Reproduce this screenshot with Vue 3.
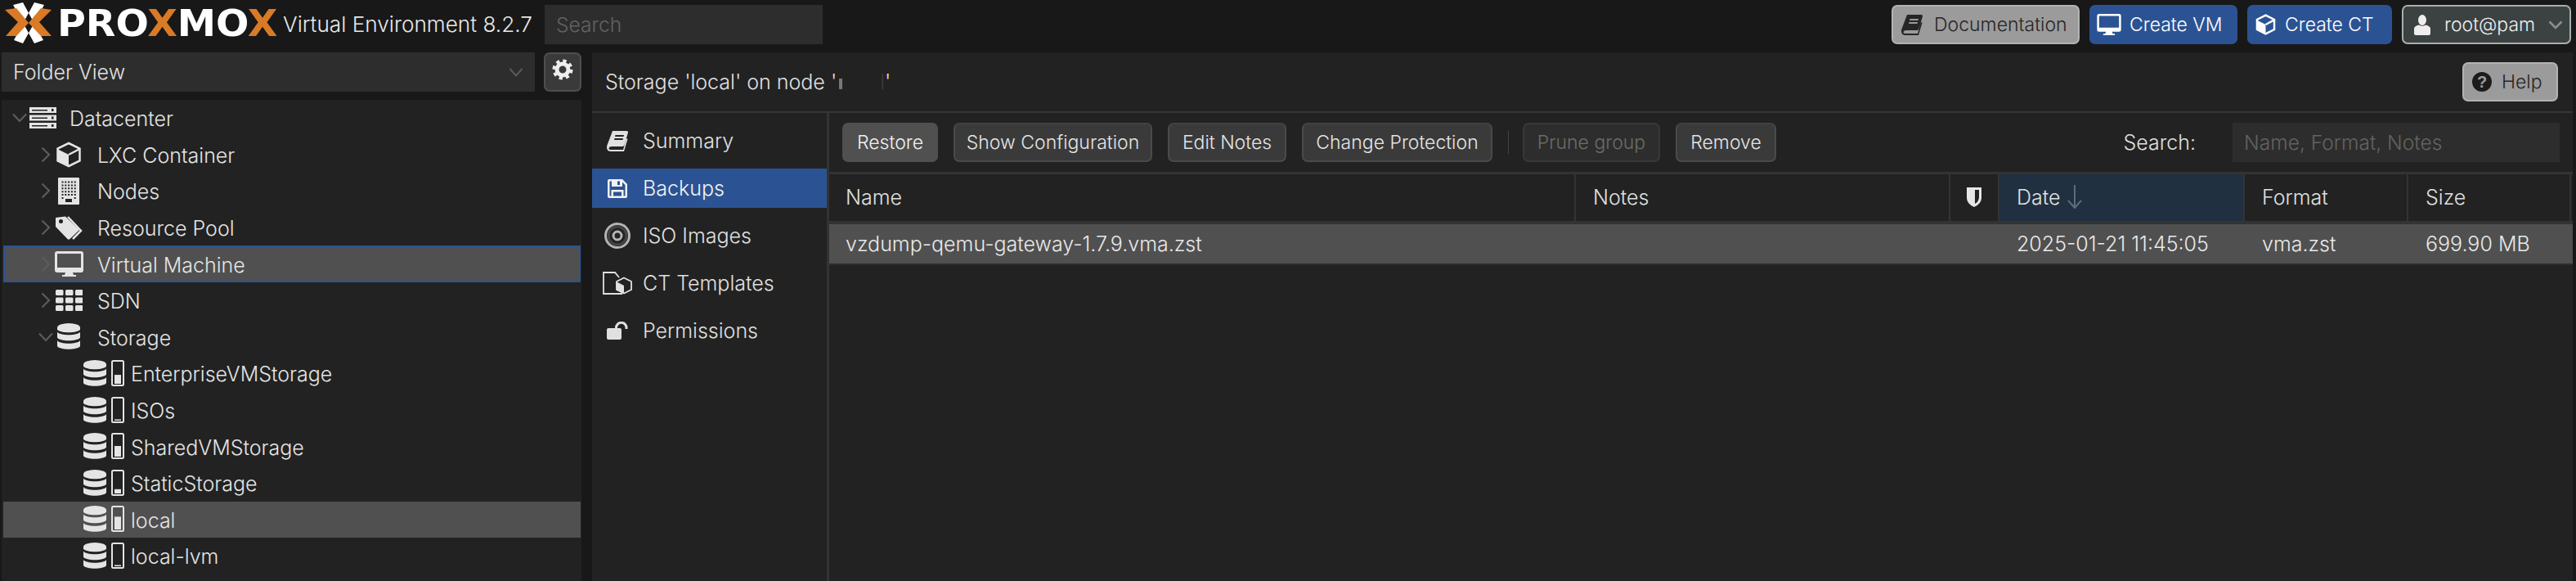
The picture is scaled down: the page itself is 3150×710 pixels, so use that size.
<script setup>
const bandsFor = () => [10.5, 21].map(y => `M0 ${y}C3 ${y + 5} 25 ${y + 5} 28 ${y}V${y + 7}C25 ${y + 12} 3 ${y + 12} 0 ${y + 7}Z`).join('')

const buildingPath = (() => {
  let d = 'M1 0H25Q26 0 26 1V32Q26 33 25 33H1Q0 33 0 32V1Q0 0 1 0Z'
  for (let r = 0; r < 6; r++) {
    for (let c = 0; c < 5; c++) {
      if (r === 5 && c > 0 && c < 4) continue
      const x = 4.5 + c * 3.8
      const y = 4.5 + r * 3.9
      d += `M${x} ${y}h2v2h-2Z`
    }
  }
  d += 'M9 26h8v4h-8Z'
  return d
})()

const sdnCells = []
for (let r = 0; r < 3; r++) for (let c = 0; c < 3; c++) sdnCells.push({ x: c * 12, y: r * 9.5 })

const tree = [
  { label: 'Datacenter', level: 0, arrow: 'down', icon: 'server' },
  { label: 'LXC Container', level: 1, arrow: 'right', icon: 'cube' },
  { label: 'Nodes', level: 1, arrow: 'right', icon: 'building' },
  { label: 'Resource Pool', level: 1, arrow: 'right', icon: 'tags' },
  { label: 'Virtual Machine', level: 1, arrow: 'right', icon: 'monitor', focus: true },
  { label: 'SDN', level: 1, arrow: 'right', icon: 'grid' },
  { label: 'Storage', level: 1, arrow: 'down', icon: 'db' },
  { label: 'EnterpriseVMStorage', level: 2, icon: 'store', pct: 0.42 },
  { label: 'ISOs', level: 2, icon: 'store', pct: 0.03 },
  { label: 'SharedVMStorage', level: 2, icon: 'store', pct: 0.5 },
  { label: 'StaticStorage', level: 2, icon: 'store', pct: 0.2 },
  { label: 'local', level: 2, icon: 'store', pct: 0.6, selected: true },
  { label: 'local-lvm', level: 2, icon: 'store', pct: 0.03 }
]

const tabs = [
  { label: 'Summary', icon: 'book' },
  { label: 'Backups', icon: 'floppy', active: true },
  { label: 'ISO Images', icon: 'cd' },
  { label: 'CT Templates', icon: 'template' },
  { label: 'Permissions', icon: 'unlock' }
]

const tools = [
  { label: 'Restore', cls: 'w-restore hot' },
  { label: 'Show Configuration', cls: 'w-show' },
  { label: 'Edit Notes', cls: 'w-edit' },
  { label: 'Change Protection', cls: 'w-change' },
  { sep: true },
  { label: 'Prune group', cls: 'w-prune off' },
  { label: 'Remove', cls: 'w-remove' }
]

const barFill = pct => Math.max(1.5, 26 * pct)
const bands = bandsFor()
</script>

<template>
  <div class="app">
    <header class="top">
      <div class="logo">
        <svg class="mark" viewBox="6 4 58 52" width="58" height="52">
          <path fill="#fff" d="M16 7L28 4L53 50L42 54ZM54 7L42 4L17 50L28 54Z" />
          <path fill="#d97a27" d="M6 13L20 11L35 29L20 45L7 45L22 28ZM63 13L50 11L35 29L50 45L63 45L48 28Z" />
        </svg>
        <span class="wordmark">PRO<b>X</b>MO<b>X</b></span>
      </div>
      <span class="product">Virtual Environment 8.2.7</span>
      <div class="field top-search">Search</div>
      <div class="top-actions">
        <button class="btn grey w-doc">
          <svg width="26" height="25" viewBox="0 0 26 25"><path fill="currentColor" fill-rule="evenodd" d="M7 0H24Q26.500 0 26 2L21.500 17Q21 19 19 19H6Q2.500 19 2.500 21.500Q2.500 23 5 23H20L24 9L25.500 10L21 25H5Q0 25 0 20Q0 18 1 16ZM10.500 5H21L20.500 7H10ZM9.500 9H20L19.500 11H9Z" /></svg>
          Documentation
        </button>
        <button class="btn blue w-vm">
          <svg width="30" height="26" viewBox="0 0 35 31"><path fill="currentColor" fill-rule="evenodd" d="M3 0H32Q35 0 35 3V23Q35 26 32 26H3Q0 26 0 23V3Q0 0 3 0ZM3 3V20H32V3ZM13 26H22L23 29H26V31H9V29H12Z" /></svg>
          Create VM
        </button>
        <button class="btn blue w-ct">
          <svg width="27" height="26" viewBox="0 0 30 32"><g fill="none" stroke="currentColor" stroke-width="3"><path d="M15 2L28 8.500V23.500L15 30L2 23.500V8.500Z" /><path d="M15 16L28 9" /></g><path fill="currentColor" d="M1 9L15 16V31L1 24Z" /></svg>
          Create CT
        </button>
        <button class="btn user w-user">
          <svg width="22" height="25" viewBox="0 0 22 25"><ellipse cx="11" cy="6.500" rx="5" ry="6.500" fill="currentColor" /><path fill="currentColor" d="M1 17Q1 14 7 12.500Q11 15 15 12.500Q21 14 21 17V23Q21 25 19 25H3Q1 25 1 23Z" /></svg>
          <span class="user-name">root@pam</span>
          <svg class="user-caret" width="18" height="11" viewBox="0 0 18 11"><path d="M1.500 1.500L9 9L16.500 1.500" fill="none" stroke="#8b8f8f" stroke-width="2.500" /></svg>
        </button>
      </div>
    </header>

    <div class="body">
      <aside class="left">
        <div class="left-tools">
          <div class="combo">
            <span>Folder View</span>
            <svg width="18" height="11" viewBox="0 0 18 11"><path d="M1.500 1L9 9.500L16.500 1" fill="none" stroke="#5a5a5a" stroke-width="2" /></svg>
          </div>
          <button class="gear">
            <svg width="26" height="26" viewBox="0 0 26 26"><circle cx="13" cy="13" r="7" fill="none" stroke="#eee" stroke-width="5" /><circle cx="13" cy="13" r="10.500" fill="none" stroke="#eee" stroke-width="4" stroke-dasharray="4.200 4.050" /></svg>
          </button>
        </div>
        <div class="tree">
          <div v-for="row in tree" :key="row.label" class="row" :class="[`lv${row.level}`, { focus: row.focus, sel: row.selected }]">
            <span class="arrow">
              <svg v-if="row.arrow === 'right'" width="12" height="20" viewBox="0 0 12 20"><path d="M1.500 1.500L10 10L1.500 18.500" fill="none" stroke="#5c5c5c" stroke-width="2.200" /></svg>
              <svg v-else-if="row.arrow === 'down'" width="18" height="12" viewBox="0 0 18 12"><path d="M1 1.500L9 10L17 1.500" fill="none" stroke="#5c5c5c" stroke-width="2.200" /></svg>
            </span>
            <span class="ico">
              <svg v-if="row.icon === 'server'" width="33" height="26" viewBox="0 0 33 26"><path fill="currentColor" fill-rule="evenodd" d="M0 0H33V7H0ZM3 3V4.500H22V3ZM27 2V5H29.500V2ZM0 9.500H33V16.500H0ZM3 12.500V14H22V12.500ZM27 11.500V14.500H29.500V11.500ZM0 19H33V26H0ZM3 22V23.500H22V22ZM27 21V24H29.500V21Z" /></svg>
              <svg v-else-if="row.icon === 'cube'" width="30" height="32" viewBox="0 0 30 32"><g fill="none" stroke="currentColor" stroke-width="2.500"><path d="M15 2L28.500 8.500V23.500L15 30L1.500 23.500V8.500Z" /><path d="M15 16L28.500 9" /></g><path fill="currentColor" d="M1 9L15 16V31L1 24Z" /></svg>
              <svg v-else-if="row.icon === 'building'" width="26" height="33" viewBox="0 0 26 33"><path fill="currentColor" fill-rule="evenodd" :d="buildingPath" /></svg>
              <svg v-else-if="row.icon === 'tags'" width="34" height="30" viewBox="0 0 34 30"><path fill="currentColor" fill-rule="evenodd" d="M1 3L13 1.500L29 17Q30 18 29 19L18.500 29Q17 30.500 15.500 29L1 14ZM5 7.500A2.500 2.500 0 1 0 10 7.500A2.500 2.500 0 1 0 5 7.500Z" /><path fill="none" stroke="currentColor" stroke-width="2.500" d="M16 2L32 19L22 29" /></svg>
              <svg v-else-if="row.icon === 'monitor'" width="35" height="31" viewBox="0 0 35 31"><path fill="currentColor" fill-rule="evenodd" d="M3 0H32Q35 0 35 3V23Q35 26 32 26H3Q0 26 0 23V3Q0 0 3 0ZM3 3V20H32V3ZM13 26H22L23 29H26V31H9V29H12Z" /></svg>
              <svg v-else-if="row.icon === 'grid'" width="33" height="26" viewBox="0 0 33 26"><rect v-for="c in sdnCells" :key="`${c.x}-${c.y}`" :x="c.x" :y="c.y" width="9.500" height="7" rx="1.500" fill="currentColor" /></svg>
              <svg v-else-if="row.icon === 'db'" width="28" height="33" viewBox="0 0 28 33"><ellipse cx="14" cy="5.500" rx="14" ry="5.500" fill="currentColor" /><path fill="currentColor" d="M0 5.500V7.500C3 12.500 25 12.500 28 7.500V5.500Z" /><path fill="currentColor" :d="bands" /></svg>
              <svg v-else width="50" height="33" viewBox="0 0 50 33">
                <ellipse cx="14" cy="5.500" rx="14" ry="5.500" fill="currentColor" /><path fill="currentColor" d="M0 5.500V7.500C3 12.500 25 12.500 28 7.500V5.500Z" /><path fill="currentColor" :d="bands" />
                <rect x="35" y="1" width="14" height="30" rx="1.500" fill="none" stroke="currentColor" stroke-width="2" />
                <rect x="38" :y="29 - barFill(row.pct)" width="8" :height="barFill(row.pct)" fill="currentColor" />
              </svg>
            </span>
            <span class="row-text">{{ row.label }}</span>
          </div>
        </div>
      </aside>

      <main class="right">
        <div class="title-bar">
          <span class="title">Storage 'local' on node '<i class="sliver"></i><span class="ghost">l</span>'</span>
          <button class="btn grey w-help">
            <svg width="24" height="24" viewBox="0 0 24 24"><circle cx="12" cy="12" r="12" fill="#1c1c1c" /><text x="12" y="19" text-anchor="middle" class="q">?</text></svg>
            Help
          </button>
        </div>
        <div class="content">
          <nav class="tabs">
            <div v-for="t in tabs" :key="t.label" class="tab" :class="{ active: t.active }">
              <span class="tab-ico">
                <svg v-if="t.icon === 'book'" width="26" height="25" viewBox="0 0 26 25"><path fill="currentColor" fill-rule="evenodd" d="M7 0H24Q26.500 0 26 2L21.500 17Q21 19 19 19H6Q2.500 19 2.500 21.500Q2.500 23 5 23H20L24 9L25.500 10L21 25H5Q0 25 0 20Q0 18 1 16ZM10.500 5H21L20.500 7H10ZM9.500 9H20L19.500 11H9Z" /></svg>
                <svg v-else-if="t.icon === 'floppy'" width="24" height="23" viewBox="0 0 24 23"><path fill="currentColor" fill-rule="evenodd" d="M2 0H18L24 6V21Q24 23 22 23H2Q0 23 0 21V2Q0 0 2 0ZM5 2.500H2.500V20.500H4.500V13H19.500V20.500H21.500V7L18 3.500V9H5ZM12 2.500H15V7H12ZM7 15.500H17V20.500H7Z" /></svg>
                <svg v-else-if="t.icon === 'cd'" width="32" height="32" viewBox="0 0 32 32"><circle cx="16" cy="16" r="14.500" fill="none" stroke="#b4b4b4" stroke-width="3" /><circle cx="16" cy="16" r="11" fill="none" stroke="#444" stroke-width="3" /><circle cx="16" cy="16" r="5" fill="none" stroke="#b4b4b4" stroke-width="3" /></svg>
                <svg v-else-if="t.icon === 'template'" width="36" height="28" viewBox="0 0 36 28"><path fill="none" stroke="currentColor" stroke-width="1.800" d="M24 27H1V1H15L20 7" /><path fill="none" stroke="currentColor" stroke-width="1.800" d="M26 7.500L35 12V22L26 26.500L17 22V12Z" /><path fill="currentColor" d="M16.500 12L26 17V27L16.500 22Z" /></svg>
                <svg v-else width="26" height="22" viewBox="0 0 26 22"><rect x="0" y="8" width="18" height="14" rx="2" fill="currentColor" /><path fill="none" stroke="currentColor" stroke-width="3" d="M11.500 9V7.500A6 6 0 0 1 24 7.500V9" /></svg>
              </span>
              <span>{{ t.label }}</span>
            </div>
          </nav>
          <section class="main">
            <div class="toolbar">
              <template v-for="t in tools" :key="t.label || 'sep'">
                <span v-if="t.sep" class="sep"></span>
                <button v-else class="tbtn" :class="t.cls">{{ t.label }}</button>
              </template>
              <span class="search-label">Search:</span>
              <div class="field grid-search">Name, Format, Notes</div>
            </div>
            <div class="grid-head grid-cols">
              <span>Name</span>
              <span>Notes</span>
              <span class="shield-cell">
                <svg width="18" height="24" viewBox="0 0 18 24"><path fill="#e6e6e6" fill-rule="evenodd" d="M0 0H18V13Q18 20 9 24Q0 20 0 13ZM10 3V20Q15 17 15 12V3Z" /></svg>
              </span>
              <span class="date-head">Date
                <svg width="20" height="30" viewBox="0 0 20 30"><path fill="none" stroke="#5c6c7c" stroke-width="2" d="M10 0V28M2 19L10 28L18 19" /></svg>
              </span>
              <span>Format</span>
              <span>Size</span>
            </div>
            <div class="grid-row grid-cols">
              <span class="file">vzdump-qemu-gateway-1.7.9.vma.zst</span>
              <span></span>
              <span></span>
              <span>2025-01-21 11:45:05</span>
              <span>vma.zst</span>
              <span>699.90 MB</span>
            </div>
          </section>
        </div>
      </main>
    </div>
  </div>
</template>

<style>
html, body { background: #181818; }
</style>

<style scoped>
.app {
  width: 3150px;
  height: 710px;
  overflow: hidden;
  background: #181818;
  color: #e0e0e0;
  font-family: Inter, "Liberation Sans", Arial, sans-serif;
  font-weight: 300;
  font-size: 25px;
  display: flex;
  flex-direction: column;
}
button { font-family: inherit; font-weight: inherit; }

/* top bar */
.top {
  height: 64px;
  flex: none;
  display: flex;
  align-items: flex-start;
  padding-top: 6px;
  box-sizing: border-box;
}
.logo {
  width: 346px;
  height: 50px;
  flex: none;
  margin-top: -2px;
  padding-left: 6px;
  box-sizing: border-box;
  display: flex;
  align-items: center;
  gap: 6px;
}
.mark { flex: none; filter: blur(0.4px); }
.wordmark {
  display: inline-block;
  font-family: "DejaVu Sans", sans-serif;
  font-weight: 700;
  font-size: 44px;
  line-height: 50px;
  color: #fff;
  filter: blur(0.7px);
  transform: scaleX(1.08);
  transform-origin: left center;
}
.wordmark b { color: #d97a27; font-weight: 700; }
.product {
  width: 320px;
  flex: none;
  font-size: 26.2px;
  line-height: 48px;
  color: #e8e8e8;
}
.field {
  background: #2d2d2d;
  color: #626262;
  box-sizing: border-box;
  height: 48px;
  line-height: 48px;
  padding-left: 14px;
  font-size: 24.6px;
}
.top-search { width: 340px; flex: none; }
.top-actions {
  margin-left: auto;
  margin-right: 6px;
  display: flex;
  gap: 12px;
}
.btn {
  height: 48px;
  box-sizing: border-box;
  border-radius: 7px;
  border: 2px solid transparent;
  display: flex;
  align-items: center;
  font-size: 23px;
  padding: 0 0 0 10px;
  gap: 14px;
  white-space: nowrap;
  flex: none;
}
.grey { background: #9b9b9b; border-color: #b3b3b3; color: #262626; }
.blue { background: #2b5394; color: #fff; border-color: #2b5394; gap: 10px; padding-left: 7px; }
.user { background: #3c4242; border-color: #a6b0ac; color: #eee; padding-left: 12px; }
.user-name { margin-left: 2px; }
.user-caret { margin-left: 2px; }
.w-doc { width: 230px; }
.w-vm { width: 181px; }
.w-ct { width: 177px; }
.w-user { width: 207px; }
.w-help { width: 117px; padding-left: 10px; gap: 12px; margin-right: 18px; }

/* left column */
.body { flex: 1; display: flex; min-height: 0; }
.left { width: 709px; margin-left: 2px; flex: none; display: flex; flex-direction: column; gap: 10px; }
.left-tools { display: flex; gap: 11px; height: 48px; flex: none; }
.combo {
  flex: 1;
  background: #2d2d2d;
  display: flex;
  align-items: center;
  justify-content: space-between;
  padding: 0 14px 0 14px;
}
.gear {
  width: 46px;
  height: 48px;
  box-sizing: border-box;
  background: #3a3a3a;
  border: 2px solid #4e4e4e;
  border-radius: 7px;
  display: flex;
  align-items: center;
  justify-content: center;
  padding: 0 0 6px;
}
.tree { flex: 1; background: #222; padding: 0 1px 0 2px; }
.row {
  height: 44.6px;
  box-sizing: border-box;
  display: flex;
  align-items: center;
  color: #e4e4e4;
}
.row.focus { background: #505050; border: 2px solid #2b5394; }
.row.sel { background: #505050; }
.row-text { padding-top: 2px; }
.arrow { width: 20px; flex: none; display: flex; justify-content: center; align-items: center; }
.ico { display: flex; align-items: center; justify-content: center; flex: none; width: 36px; margin-right: 15px; }
.lv0 { padding-left: 10px; }
.lv1 { padding-left: 42px; }
.lv1 .ico { margin-right: 17px; }
.lv2 { padding-left: 78px; }
.lv2 .ico { width: 50px; margin-right: 8px; }
.focus.lv1 { padding-left: 40px; }

/* right column */
.right { width: 2422px; margin-left: 13px; flex: none; background: #222; display: flex; flex-direction: column; }
.title-bar {
  height: 74px;
  flex: none;
  box-sizing: border-box;
  border-bottom: 2px solid #363636;
  display: flex;
  align-items: center;
  justify-content: space-between;
  padding-left: 16px;
}
.title { display: flex; align-items: center; white-space: pre; font-size: 25px; }
.sliver { width: 4px; height: 13px; background: #777; margin: 5px 0 0 3px; }
.ghost { color: #3a3a3a; margin-left: 46px; }
.content { flex: 1; display: flex; min-height: 0; }
.tabs { width: 287px; flex: none; display: flex; flex-direction: column; padding-top: 5px; }
.tab { height: 58px; flex: none; display: flex; align-items: center; color: #e0e0e0; }
.tab.active { background: #2b5394; color: #f2f2f2; height: 48px; margin: 5px 0; }
.tab-ico { width: 62px; display: flex; justify-content: center; flex: none; }
.main { flex: 1; border-left: 3px solid #333; display: flex; flex-direction: column; min-width: 0; }
.toolbar {
  height: 75px;
  flex: none;
  box-sizing: border-box;
  padding: 12px 16px;
  border-bottom: 3px solid #333;
  display: flex;
  align-items: center;
  gap: 19px;
}
.tbtn {
  height: 48px;
  box-sizing: border-box;
  background: #3a3a3a;
  border: 2px solid #4a4a4a;
  border-top-color: #424242;
  border-radius: 7px;
  color: #e4e4e4;
  font-size: 23px;
  padding: 0;
  white-space: nowrap;
  flex: none;
}
.tbtn.hot { background: #505050; border-color: #505050; color: #f0f0f0; }
.tbtn.off { background: #2d2d2d; border-color: #383838; color: #6b6b6b; }
.w-restore { width: 117px; }
.w-show { width: 243px; }
.w-edit { width: 145px; }
.w-change { width: 233px; }
.w-prune { width: 168px; margin-left: -2px; }
.w-remove { width: 123px; }
.sep { width: 1px; height: 28px; background: #444; flex: none; }
.search-label { margin-left: auto; margin-right: 26px; }
.grid-search { width: 400px; flex: none; }
.grid-cols { display: grid; grid-template-columns: 913px 458px 60px 300px 200px 199px; }
.grid-head { height: 57px; flex: none; }
.grid-head > span {
  display: flex;
  align-items: center;
  padding-left: 21px;
  padding-bottom: 2px;
  border-right: 2px solid #333;
  box-sizing: border-box;
  gap: 8px;
}
.grid-head > span:first-child { padding-left: 20px; }
.grid-head > span.shield-cell { padding-left: 20px; }
.grid-head > span.date-head { background: #203040; }
.grid-row {
  height: 48px;
  flex: none;
  box-sizing: content-box;
  background: #505050;
  border-top: 4px solid #333;
  border-bottom: 2px solid #2d2d2d;
  align-items: center;
  color: #e8e8e8;
}
.grid-row > span { padding-left: 21px; }
.grid-row > .file { padding-left: 20px; }
.q { font: 700 20px "Liberation Sans", sans-serif; fill: #9b9b9b; }
</style>
